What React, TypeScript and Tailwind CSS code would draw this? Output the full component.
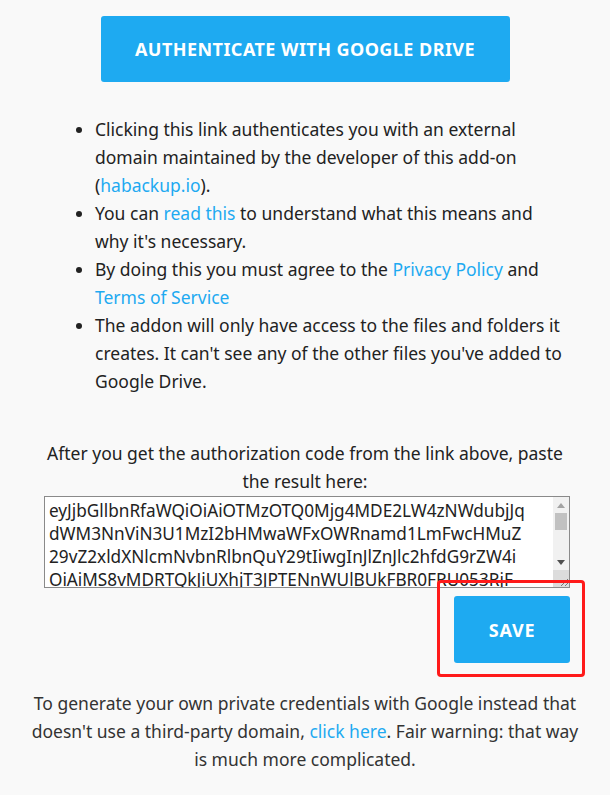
import React from "react";

const TOKEN =
  "eyJjbGllbnRfaWQiOiAiOTMzOTQ0Mjg4MDE2LW4zNWdubjJqdWM3NnViN3U1MzI2bHMwaWFxOWRnamd1LmFwcHMuZ29vZ2xldXNlcmNvbnRlbnQuY29tIiwgInJlZnJlc2hfdG9rZW4iOiAiMS8vMDRTQkJiUXhjT3JPTENnWUlBUkFBR0FRU053RjFMOXJpZm9WVWt6bGd5";

function Link({ children }: { children: React.ReactNode }) {
  return <a className="text-[#1eaaf1] cursor-pointer">{children}</a>;
}

// fake classic scrollbar to match the screenshot
function ScrollBar() {
  return (
    <div className="flex w-[16px] flex-col bg-[#f1f1f1]">
      <div className="flex h-[16px] items-center justify-center">
        <svg width="8" height="5" viewBox="0 0 8 5">
          <path d="M0 5 L4 0 L8 5 Z" fill="#a3a3a3" />
        </svg>
      </div>
      <div className="mx-[2px] h-[17px] bg-[#c1c1c1]" />
      <div className="flex-1" />
      <div className="flex h-[16px] items-center justify-center">
        <svg width="8" height="5" viewBox="0 0 8 5">
          <path d="M0 0 L8 0 L4 5 Z" fill="#505050" />
        </svg>
      </div>
      <div className="relative h-[17px] bg-[#dcdcdc]">
        <svg className="absolute bottom-[1px] right-[1px]" width="9" height="9" viewBox="0 0 9 9">
          <path d="M9 2 L2 9 M9 6 L6 9" stroke="#777" strokeWidth="1" />
        </svg>
      </div>
    </div>
  );
}

export default function App() {
  return (
    <div
      className="min-h-[795px] w-[610px] bg-[#f9f9f9] text-[#222] text-[17.5px] leading-[28px]"
      style={{ fontFamily: '"Segoe UI", "Noto Sans", "Open Sans", sans-serif' }}
    >
      <div className="flex justify-center pt-[16px]">
        <button className="h-[66px] w-[409px] rounded-[3px] bg-[#1eaaf1] text-[18px] font-bold tracking-[0.45px] text-white">
          AUTHENTICATE WITH GOOGLE DRIVE
        </button>
      </div>

      {/* Bullets */}
      <ul className="mt-[33px] ml-[55px] mr-[44px] list-disc pl-[40px] marker:text-[#222]">
        <li>
          Clicking this link authenticates you with an external domain maintained by
          the developer of this add-on (<Link>habackup.io</Link>).
        </li>
        <li>
          You can <Link>read this</Link> to understand what this means and why it's
          necessary.
        </li>
        <li>
          By doing this you must agree to the <Link>Privacy Policy</Link> and{" "}
          <Link>Terms of Service</Link>
        </li>
        <li>
          The addon will only have access to the files and folders it creates. It
          can't see any of the other files you've added to Google Drive.
        </li>
      </ul>

      <p className="mt-[44px] px-[40px] text-center">
        After you get the authorization code from the link above, paste the result
        here:
      </p>

      <div className="mx-[40px] flex flex-col items-end">
        <div className="mt-[1px] flex h-[92px] w-[526px] border border-[#8a8a8a] bg-white">
          <textarea
            readOnly
            value={TOKEN}
            className="h-full flex-1 resize-none overflow-hidden bg-white pl-[4px] pr-[25px] py-[2px] text-[17.2px] leading-[23px] text-[#222] outline-none"
            style={{ wordBreak: "break-all" }}
          />
          <ScrollBar />
        </div>
        <div className="relative mt-[8px]">
          <button className="h-[67px] w-[116px] rounded-[3px] bg-[#1eaaf1] text-[18px] font-bold tracking-[0.8px] text-white">
            SAVE
          </button>
          {/* red highlight annotation */}
          <div className="pointer-events-none absolute left-[-17px] top-[-16px] h-[97px] w-[148px] rounded-[4px] border-[3px] border-[#ff1a1a]" />
        </div>
      </div>

      <p className="mt-[26px] px-[24px] text-center text-[#333]">
        To generate your own private credentials with Google instead that doesn't use
        a third-party domain, <Link>click here</Link>. Fair warning: that way is much
        more complicated.
      </p>
    </div>
  );
}
